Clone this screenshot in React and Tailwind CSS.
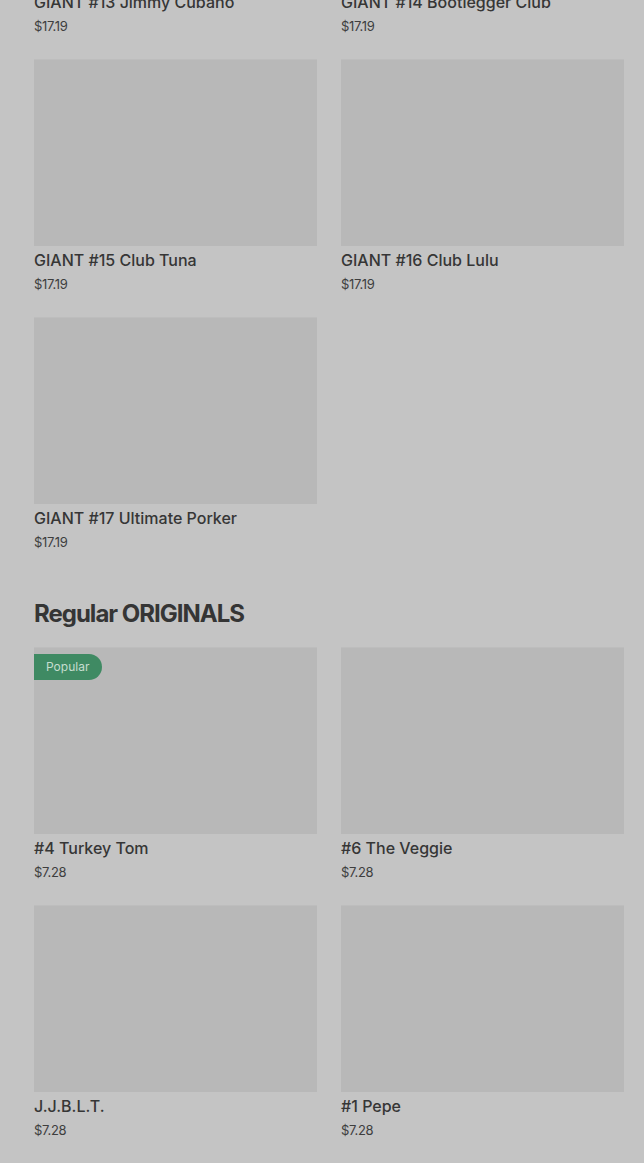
import React from 'react';

const giants = [
  { name: 'GIANT #13 Jimmy Cubano', price: '$17.19' },
  { name: 'GIANT #14 Bootlegger Club', price: '$17.19' },
  { name: 'GIANT #15 Club Tuna', price: '$17.19' },
  { name: 'GIANT #16 Club Lulu', price: '$17.19' },
  { name: 'GIANT #17 Ultimate Porker', price: '$17.19' },
];

const regulars = [
  { name: '#4 Turkey Tom', price: '$7.28', popular: true },
  { name: '#6 The Veggie', price: '$7.28' },
  { name: 'J.J.B.L.T.', price: '$7.28' },
  { name: '#1 Pepe', price: '$7.28' },
];

const font = { fontFamily: 'Inter, "Liberation Sans", sans-serif' };

const MenuCard = ({ item }) => (
  <div className="flex flex-col">
    <div className="relative h-[187px] bg-[#b8b8b8] border-t border-[#bdbdbd]">
      {item.popular ? (
        <span className="absolute left-0 top-[6px] h-[26px] w-[68px] rounded-r-full bg-[#3f8a63] pl-[12px] text-[12px] leading-[26px] text-[#c6ddcf]">
          Popular
        </span>
      ) : null}
    </div>
    <div className="mt-[4px] text-[16px] leading-[20px] font-medium text-[#363636]">{item.name}</div>
    <div className="mt-[6px] text-[13px] leading-[16px] tracking-[-0.3px] text-[#3e3e3e]">{item.price}</div>
  </div>
);

export default function App() {
  return (
    <div className="h-[1163px] overflow-hidden bg-[#c4c4c4]" style={font}>
      <div className="pl-[34px] pr-[20px] -mt-[199px]">
        <div className="grid grid-cols-2 gap-x-[24px] gap-y-[25px]">
          {giants.map((g) => (
            <MenuCard key={g.name} item={g} />
          ))}
        </div>

        <h2 className="mt-[48px] mb-[17px] text-[24px] leading-[32px] font-bold tracking-[-1px] text-[#353535]">
          Regular ORIGINALS
        </h2>

        <div className="grid grid-cols-2 gap-x-[24px] gap-y-[25px]">
          {regulars.map((r) => (
            <MenuCard key={r.name} item={r} />
          ))}
        </div>
      </div>
    </div>
  );
}
